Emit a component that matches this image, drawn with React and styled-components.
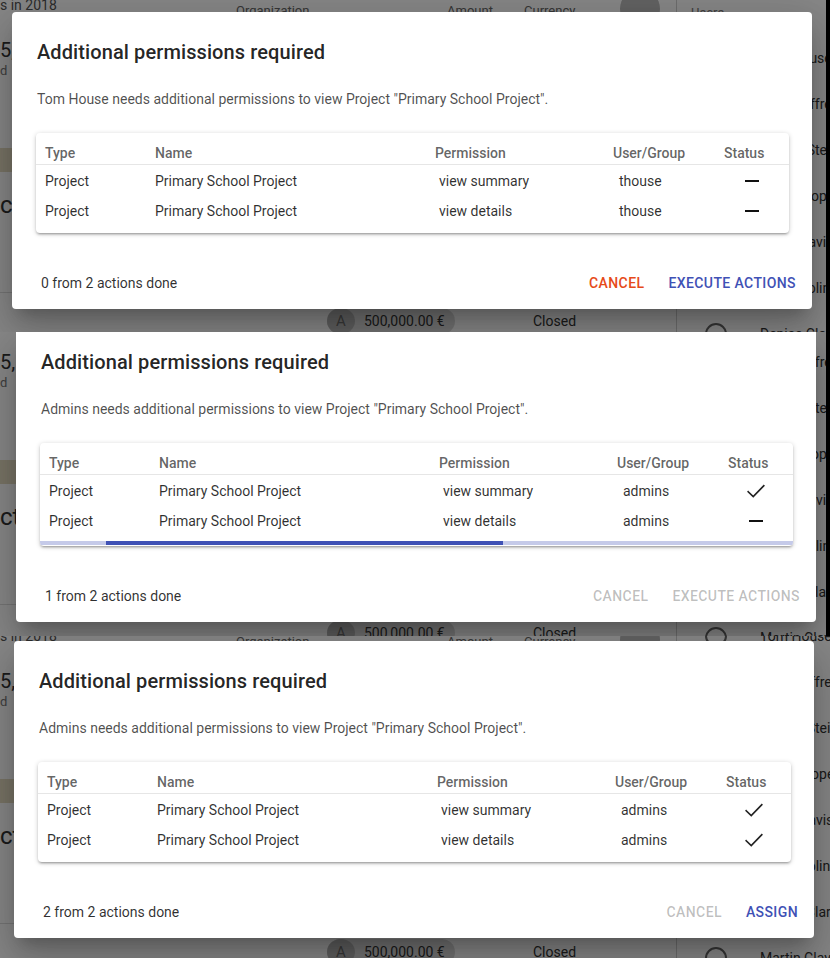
import styled, { createGlobalStyle } from 'styled-components'

const GlobalStyle = createGlobalStyle`
  * { box-sizing: border-box; }
  body {
    margin: 0;
    font-family: Roboto, "Liberation Sans", Arial, sans-serif;
    background: #878787;
  }
`

const people = ['Tom House', 'Mary Jeffrey', 'Ronald Stein', 'Jane Cooper', 'Sarah Davis', 'Anne Molina', 'Denise Clark', 'Martin Clay']

const rows = [
  { type: 'Project', name: 'Primary School Project', permission: 'view summary' },
  { type: 'Project', name: 'Primary School Project', permission: 'view details' },
]

const shots = [
  {
    h: 332, top: 12, left: 12, cropTop: false, edge: true, listShift: -11, mainShift: 0,
    who: 'Tom House', user: 'thouse', done: [false, false], progress: false,
    footer: '0 from 2 actions done', cancel: 'cancel', action: 'EXECUTE ACTIONS', actionState: 'primary',
  },
  {
    h: 304, top: 0, left: 16, cropTop: true, edge: true, listShift: -85, mainShift: -20,
    who: 'Admins', user: 'admins', done: [true, false], progress: true,
    footer: '1 from 2 actions done', cancel: 'disabled', action: 'EXECUTE ACTIONS', actionState: 'disabled',
  },
  {
    h: 322, top: 5, left: 14, cropTop: false, edge: false, listShift: -69, mainShift: -5,
    who: 'Admins', user: 'admins', done: [true, true], progress: false,
    footer: '2 from 2 actions done', cancel: 'disabled', action: 'ASSIGN', actionState: 'primary',
  },
]

const CheckIcon = () => (
  <svg width="22" height="22" viewBox="0 0 24 24" fill="none">
    <path d="M3.5 12.8 L9 18 L20.5 6.3" stroke="#222" strokeWidth="1.8" strokeLinecap="square" />
  </svg>
)

const App = () => (
  <>
    <GlobalStyle />
    {shots.map((s, i) => (
      <Shot key={i} $h={s.h}>
        <Backdrop>
          <MainPane>
            <MainInner $shift={s.mainShift}>
              <TopRow>
                <Caption>s in 2018</Caption>
                <ColHead $w={211}>Organization</ColHead>
                <ColHead $w={77}>Amount</ColHead>
                <ColHead $w={96}>Currency</ColHead>
                <Blob />
              </TopRow>
              <DateText>5, 2018</DateText>
              <SubText>d</SubText>
              <Band />
              <Heading>cts</Heading>
              <Divider />
              <ChipRow>
                <Chip>
                  <ChipAvatar>A</ChipAvatar>
                  500,000.00 €
                </Chip>
                <StatusText>Closed</StatusText>
              </ChipRow>
            </MainInner>
          </MainPane>
          <SidePanel $edge={s.edge}>
            <SideList $shift={s.listShift}>
              <SideHeader>Users</SideHeader>
              {people.map(p => (
                <SideItem key={p}>
                  <SideRing />
                  <span>{p}</span>
                </SideItem>
              ))}
              <SideHeader>Groups</SideHeader>
            </SideList>
          </SidePanel>
        </Backdrop>

        <Scrim $top={s.top} $left={s.left}>
          <Dialog $cropTop={s.cropTop}>
            <Title>Additional permissions required</Title>
            <Description>{s.who} needs additional permissions to view Project "Primary School Project".</Description>
            <TableCard $bar={s.progress}>
              <HeadRow>
                <span>Type</span>
                <span>Name</span>
                <span>Permission</span>
                <span>User/Group</span>
                <span>Status</span>
              </HeadRow>
              {rows.map((r, j) => (
                <BodyRow key={j}>
                  <span>{r.type}</span>
                  <span>{r.name}</span>
                  <Cell $shift={4}>{r.permission}</Cell>
                  <Cell $shift={6}>{s.user}</Cell>
                  <StatusCell>{s.done[j] ? <CheckIcon /> : <Dash />}</StatusCell>
                </BodyRow>
              ))}
              {s.progress && (
                <Track>
                  <TrackBar />
                </Track>
              )}
            </TableCard>
            <Actions>
              <Counter>{s.footer}</Counter>
              <TextButton $kind={s.cancel}>Cancel</TextButton>
              <TextButton $kind={s.actionState}>{s.action}</TextButton>
            </Actions>
          </Dialog>
        </Scrim>
      </Shot>
    ))}
  </>
)

export default App

const Shot = styled.section`
  position: relative;
  height: ${p => p.$h}px;
  overflow: hidden;
`

const Backdrop = styled.div`
  display: flex;
  height: 100%;
  background: #fff;
  color: #333;
`

const MainPane = styled.div`
  width: 676px;
  overflow: hidden;
`

const MainInner = styled.div`
  display: flex;
  flex-direction: column;
  margin-top: ${p => p.$shift}px;
`

const TopRow = styled.div`
  display: flex;
  align-items: flex-end;
  height: 24px;
  margin-top: -5px;
`

const Caption = styled.div`
  width: 236px;
  align-self: flex-start;
  font-size: 14px;
  line-height: 20px;
  color: #555;
`

const ColHead = styled.div`
  width: ${p => p.$w}px;
  font-size: 13px;
  line-height: 16px;
  color: #666;
`

const Blob = styled.div`
  width: 40px;
  height: 40px;
  border-radius: 50%;
  background: #bbb;
  align-self: flex-end;
  margin-bottom: -10px;
`

const DateText = styled.div`
  margin-top: 19px;
  font-size: 20px;
  line-height: 24px;
  color: #333;
`

const SubText = styled.div`
  font-size: 13px;
  line-height: 18px;
  color: #777;
`

const Band = styled.div`
  margin-top: 68px;
  height: 24px;
  background: #e4dcc0;
`

const Heading = styled.div`
  margin-top: 17px;
  font-size: 24px;
  line-height: 32px;
  color: #333;
`

const Divider = styled.div`
  margin-top: 71px;
  height: 1px;
  background: #ddd;
`

const ChipRow = styled.div`
  display: flex;
  align-items: center;
  margin-top: 15px;
  padding-left: 327px;
  font-size: 14px;
`

const Chip = styled.div`
  display: flex;
  align-items: center;
  gap: 9px;
  width: 128px;
  height: 26px;
  border-radius: 13px;
  background: #dadada;
  color: #333;
`

const ChipAvatar = styled.div`
  width: 28px;
  height: 26px;
  border-radius: 50%;
  background: #b4b4b4;
  color: #6a6a6a;
  display: flex;
  align-items: center;
  justify-content: center;
  font-size: 15px;
`

const StatusText = styled.div`
  margin-left: 78px;
  color: #333;
`

const SidePanel = styled.aside`
  width: 154px;
  overflow: hidden;
  border-left: 1px solid #d0d0d0;
  border-right: ${p => (p.$edge ? '4px solid #000' : '0')};
`

const SideList = styled.div`
  display: flex;
  flex-direction: column;
  margin-top: ${p => p.$shift}px;
`

const SideHeader = styled.div`
  height: 46px;
  display: flex;
  align-items: center;
  padding-left: 14px;
  font-size: 13px;
  color: #777;
`

const SideItem = styled.div`
  height: 46px;
  display: flex;
  align-items: center;
  gap: 33px;
  padding-left: 28px;
  font-size: 14px;
  color: #333;
  white-space: nowrap;
`

const SideRing = styled.div`
  width: 22px;
  height: 22px;
  flex: none;
  border-radius: 50%;
  border: 2px solid #666;
`

const Scrim = styled.div`
  position: absolute;
  inset: 0;
  background: rgba(0, 0, 0, 0.47);
  padding: ${p => p.$top}px 0 0 ${p => p.$left}px;
`

const Dialog = styled.div`
  width: 800px;
  background: #fff;
  border-radius: ${p => (p.$cropTop ? '0 0 4px 4px' : '4px')};
  box-shadow: 0 11px 15px -7px rgba(0, 0, 0, 0.2), 0 24px 38px 3px rgba(0, 0, 0, 0.14), 0 9px 46px 8px rgba(0, 0, 0, 0.12);
  padding-top: ${p => (p.$cropTop ? 18 : 28)}px;
  color: rgba(0, 0, 0, 0.87);
`

const Title = styled.h2`
  margin: 0;
  padding: 0 25px;
  font-size: 20px;
  line-height: 24px;
  font-weight: 500;
  letter-spacing: 0.1px;
`

const Description = styled.p`
  margin: 25px 0 0;
  padding: 0 25px;
  font-size: 14px;
  line-height: 20px;
  color: rgba(0, 0, 0, 0.7);
`

const TableCard = styled.div`
  margin: 24px 23px 0 24px;
  padding: 10px 0 ${p => (p.$bar ? 1 : 8)}px;
  border-radius: 4px;
  overflow: hidden;
  box-shadow: 0 1px 5px rgba(0, 0, 0, 0.2), 0 2px 2px rgba(0, 0, 0, 0.14), 0 3px 1px -2px rgba(0, 0, 0, 0.12);
  font-size: 14px;
`

const gridCols = `
  display: grid;
  grid-template-columns: 110px 280px 178px 111px 1fr;
  padding-left: 9px;
  align-items: center;
`

const HeadRow = styled.div`
  ${gridCols}
  line-height: 20px;
  padding-bottom: 1px;
  border-bottom: 1px solid #e6e6e6;
  font-weight: 500;
  color: rgba(0, 0, 0, 0.62);
`

const BodyRow = styled.div`
  ${gridCols}
  height: 30px;
  padding-top: 2px;
  color: rgba(0, 0, 0, 0.82);
`

const Cell = styled.span`
  padding-left: ${p => p.$shift}px;
`

const StatusCell = styled.div`
  width: 56px;
  display: flex;
  justify-content: center;
  align-items: center;
`

const Dash = styled.div`
  width: 14px;
  height: 2px;
  background: #111;
`

const Track = styled.div`
  margin-top: 6px;
  height: 4px;
  background: #c5cae9;
`

const TrackBar = styled.div`
  margin-left: 66px;
  width: 397px;
  height: 100%;
  background: #3f51b5;
`

const Actions = styled.div`
  display: flex;
  align-items: center;
  gap: 8px;
  margin-top: 24px;
  padding: 8px 8px 8px 29px;
`

const Counter = styled.div`
  flex: 1;
  font-size: 14px;
  color: rgba(0, 0, 0, 0.82);
`

const TextButton = styled.button`
  min-width: 64px;
  height: 36px;
  padding: 6px 8px;
  border: 0;
  background: transparent;
  font-family: inherit;
  font-size: 14px;
  font-weight: 500;
  letter-spacing: 0.4px;
  text-transform: uppercase;
  color: ${p => (p.$kind === 'cancel' ? '#e64a19' : p.$kind === 'primary' ? '#3f51b5' : 'rgba(0, 0, 0, 0.26)')};
`
